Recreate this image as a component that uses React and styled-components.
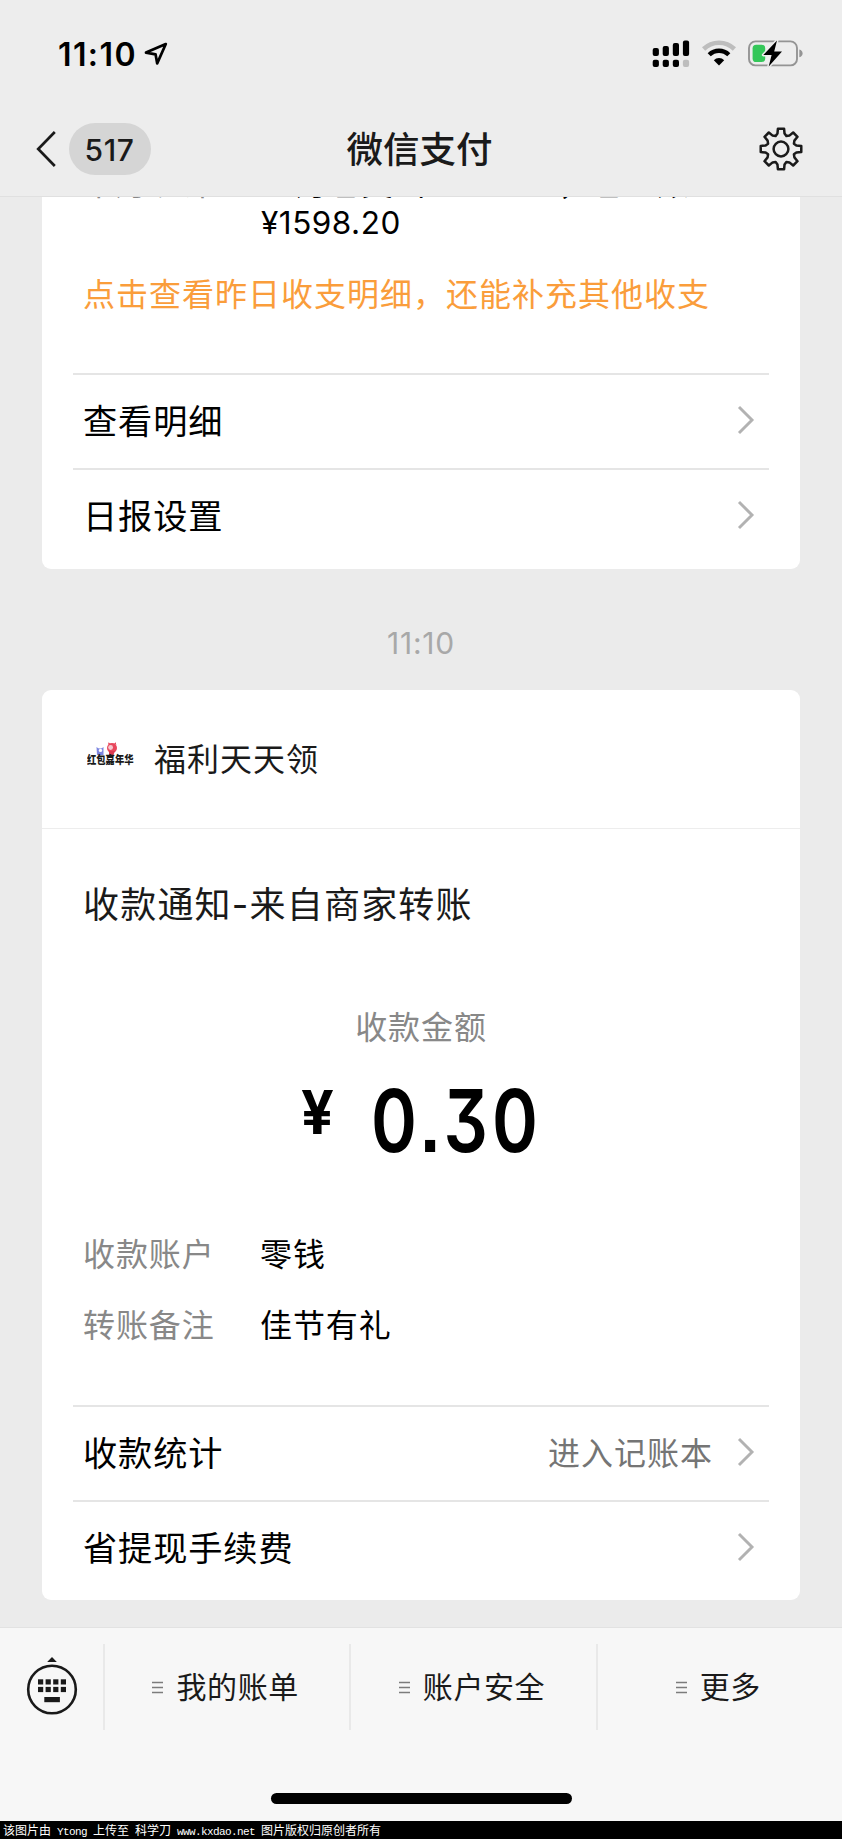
import styled, { createGlobalStyle } from "styled-components"

const GlobalStyle = createGlobalStyle`
    * {
        box-sizing: border-box;
    }

    body {
        margin: 0;
        background: #ebebeb;
        font-family: Inter, "Noto Sans CJK SC", sans-serif;
        color: #000;
    }
`

const links = {
    report: [{ title: "查看明细" }, { title: "日报设置" }],
    payment: [{ title: "收款统计", hint: "进入记账本" }, { title: "省提现手续费" }],
}

const fields = [
    { label: "收款账户", value: "零钱" },
    { label: "转账备注", value: "佳节有礼" },
]

const menus = ["我的账单", "账户安全", "更多"]

const LocationIcon = () => (
    <svg width="24" height="24" viewBox="0 0 24 24" fill="none" stroke="#000" strokeWidth="2.7" strokeLinejoin="round">
        <path d="M21.8 2 L2 10.6 L11.6 12.4 L13.2 21.4 Z" />
    </svg>
)

const SignalIcon = () => (
    <svg width="38" height="28" viewBox="0 0 38 28">
        <rect x="0.7" y="8" width="6.2" height="8" rx="2" />
        <rect x="10.7" y="6" width="6.2" height="10" rx="2" />
        <rect x="20.8" y="3" width="6.2" height="13" rx="2" />
        <rect x="30.9" y="0.5" width="6.2" height="15.5" rx="2" />
        <rect x="0.7" y="19.7" width="6.2" height="7.3" rx="2" />
        <rect x="10.7" y="19.7" width="6.2" height="7.3" rx="2" />
        <rect x="20.8" y="19.7" width="6.2" height="7.3" rx="2" />
        <rect x="30.9" y="19.7" width="6.2" height="7.3" rx="2" fill="#bdbdbd" />
    </svg>
)

const WifiIcon = () => (
    <svg width="34" height="28" viewBox="0 0 34 28" fill="none">
        <path d="M1.6 9 A22 22 0 0 1 32.4 9" stroke="#bdbdbd" strokeWidth="4.6" />
        <path d="M7.2 14.7 A14 14 0 0 1 26.8 14.7" stroke="#000" strokeWidth="4.4" />
        <path d="M17 25.4 L11.8 20.2 A7.4 7.4 0 0 1 22.2 20.2 Z" fill="#000" />
    </svg>
)

const BatteryIcon = () => (
    <svg width="55" height="28" viewBox="0 0 55 28">
        <rect x="1" y="1.4" width="48" height="24" rx="6.5" fill="none" stroke="#949494" strokeWidth="1.9" />
        <path d="M51.3 9.6 Q54.6 10.6 54.6 13.4 Q54.6 16.2 51.3 17.2 Z" fill="#949494" />
        <rect x="4.6" y="4.8" width="12.6" height="17.2" rx="3.6" fill="#34c759" />
        <path
            d="M29 0.4 L15.3 15 H23.6 L20.7 26.6 L34 11.4 H26.2 Z"
            fill="#000"
            stroke="#ededed"
            strokeWidth="3"
            paintOrder="stroke"
            strokeLinejoin="round"
        />
    </svg>
)

const BackIcon = () => (
    <svg width="20" height="38" viewBox="0 0 20 38" fill="none" stroke="#1a1a1a" strokeWidth="2.7">
        <path d="M18.8 2 L2.2 19 L18.8 36" />
    </svg>
)

// eight teeth, built from one tooth outline turned by 45 degrees
const GearIcon = () => {
    const tooth = [
        [14, -22.5],
        [15.8, -13],
        [20.5, -8.6],
        [20.5, 8.6],
        [15.8, 13],
    ]
    const points = []
    for (let i = 0; i < 8; i++) {
        tooth.forEach(([r, deg]) => {
            const a = ((i * 45 + deg) * Math.PI) / 180
            points.push(`${(22 + r * Math.cos(a)).toFixed(2)},${(22 + r * Math.sin(a)).toFixed(2)}`)
        })
    }
    return (
        <svg width="44" height="44" viewBox="0 0 44 44" fill="none" stroke="#1a1a1a" strokeWidth="2.5" strokeLinejoin="round">
            <polygon points={points.join(" ")} />
            <circle cx="22" cy="22" r="7.4" />
        </svg>
    )
}

const Chevron = () => (
    <svg width="18" height="30" viewBox="0 0 18 30" fill="none" stroke="#b2b2b2" strokeWidth="2.9">
        <path d="M2 2 L15 15 L2 28" />
    </svg>
)

const KeyboardIcon = () => (
    <svg width="52" height="60" viewBox="0 0 52 60" fill="#1a1a1a">
        <path d="M26 1 L30.8 6 H21.2 Z" />
        <circle cx="26" cy="33.5" r="23.8" fill="none" stroke="#1a1a1a" strokeWidth="2.6" />
        {[0, 1].map((row) =>
            [0, 1, 2, 3].map((col) => (
                <rect key={`${row}${col}`} x={12 + col * 7.6} y={23.3 + row * 7.6} width="5.2" height="5.2" />
            ))
        )}
        <rect x="18.3" y="41" width="15.6" height="5.2" />
    </svg>
)

const MenuIcon = () => (
    <svg width="11" height="13" viewBox="0 0 11 13" stroke="#7c7c7c" strokeWidth="1.3">
        <path d="M0 1.5 H11 M0 6.5 H11 M0 11.5 H11" />
    </svg>
)

const MerchantLogo = () => (
    <Logo>
        <svg width="22" height="14" viewBox="0 0 22 14">
            <path d="M0.5 5 Q4 8 7.5 5 V13 H1 Z" fill="#7d86e0" />
            <circle cx="4.5" cy="8.4" r="1.7" fill="#fff" />
            <circle cx="16" cy="6" r="5" fill="#e8475c" />
            <path d="M12 2.5 L12.6 0.3 L14.5 2 M18 1.8 L19.8 0.3 L20.3 3" fill="#e8475c" />
            <circle cx="14.6" cy="5.5" r="2.4" fill="#f5c8cf" />
            <path d="M13 9 H19 L17 14 H13 Z" fill="#d93a50" />
        </svg>
        <LogoText>红包嘉年华</LogoText>
    </Logo>
)

const LinkRows = ({ items }) => (
    <Links>
        {items.map((item) => (
            <LinkRow key={item.title}>
                <span>{item.title}</span>
                {item.hint && <Hint>{item.hint}</Hint>}
                <Chevron />
            </LinkRow>
        ))}
    </Links>
)

const App = () => {
    return (
        <>
            <GlobalStyle />
            <Page>
                <Header>
                    <StatusBar>
                        <Clock>11:10</Clock>
                        <LocationIcon />
                        <StatusIcons>
                            <SignalIcon />
                            <WifiIcon />
                            <BatteryIcon />
                        </StatusIcons>
                    </StatusBar>
                    <NavBar>
                        <Back>
                            <BackIcon />
                            <Unread>517</Unread>
                        </Back>
                        <PageTitle>微信支付</PageTitle>
                        <Settings>
                            <GearIcon />
                        </Settings>
                    </NavBar>
                </Header>

                <Chat>
                    <ReportCard>
                        <Summary>
                            <SummaryLabel>本月统计</SummaryLabel>
                            <div>
                                <SummaryLine>10月已支出¥800.00，已入账</SummaryLine>
                                <div>¥1598.20</div>
                            </div>
                        </Summary>
                        <Promo>点击查看昨日收支明细，还能补充其他收支</Promo>
                        <LinkRows items={links.report} />
                    </ReportCard>

                    <Time>11:10</Time>

                    <Card>
                        <Merchant>
                            <MerchantLogo />
                            <span>福利天天领</span>
                        </Merchant>
                        <NoticeTitle>收款通知-来自商家转账</NoticeTitle>
                        <AmountLabel>收款金额</AmountLabel>
                        <Amount>
                            <Yen>¥</Yen>
                            <Digits>0.30</Digits>
                        </Amount>
                        <Fields>
                            {fields.map((field) => (
                                <Field key={field.label}>
                                    <dt>{field.label}</dt>
                                    <dd>{field.value}</dd>
                                </Field>
                            ))}
                        </Fields>
                        <LinkRows items={links.payment} />
                    </Card>
                </Chat>

                <Footer>
                    <MenuBar>
                        <KeyboardButton>
                            <KeyboardIcon />
                        </KeyboardButton>
                        {menus.map((menu) => (
                            <MenuButton key={menu}>
                                <MenuIcon />
                                <span>{menu}</span>
                            </MenuButton>
                        ))}
                    </MenuBar>
                    <HomeIndicator />
                </Footer>

                <Watermark>
                    该图片由<Latin> Ytong </Latin>上传至<Latin> </Latin>科学刀<Latin> www.kxdao.net </Latin>图片版权归原创者所有
                </Watermark>
            </Page>
        </>
    )
}

const Page = styled.div`
    width: 842px;
    height: 1839px;
    display: flex;
    flex-direction: column;
    overflow: hidden;
    white-space: nowrap;
`

const Header = styled.header`
    height: 197px;
    flex: none;
    background: #ededed;
    border-bottom: 1px solid #e0e0e0;
`

const StatusBar = styled.div`
    height: 101px;
    padding: 6px 39px 0 58px;
    display: flex;
    align-items: center;
`

const Clock = styled.div`
    width: 86px;
    padding-top: 2px;
    font-size: 32px;
    line-height: 40px;
    font-weight: 600;
    letter-spacing: 1.4px;
`

const StatusIcons = styled.div`
    margin-left: auto;
    display: flex;
    align-items: center;
    gap: 12px;
`

const NavBar = styled.div`
    height: 96px;
    display: grid;
    grid-template-columns: 1fr auto 1fr;
    align-items: center;
    padding: 0 39px 0 36px;
`

const Back = styled.div`
    display: flex;
    align-items: center;
    gap: 13px;
`

const Unread = styled.div`
    width: 82px;
    height: 52px;
    border-radius: 26px;
    background: #d5d5d5;
    color: #1a1a1a;
    font-size: 30px;
    line-height: 54px;
    text-align: center;
    font-weight: 450;
    letter-spacing: 0.6px;
    text-indent: -1px;
`

const PageTitle = styled.h1`
    margin: 0;
    padding-top: 2px;
    font-size: 36.5px;
    line-height: 40px;
    font-weight: 500;
    color: #1a1a1a;
`

const Settings = styled.div`
    justify-self: end;
    display: flex;
`

const Chat = styled.main`
    height: 1430px;
    flex: none;
    padding: 0 42px;
`

const Card = styled.section`
    background: #fff;
    border-radius: 9px;
    overflow: hidden;
`

const ReportCard = styled(Card)`
    height: 372px;
    border-radius: 0 0 9px 9px;
`

const Summary = styled.div`
    height: 45px;
    padding: 0 41px;
    display: flex;
    align-items: flex-end;
    font-size: 31.5px;
    line-height: 38px;
    letter-spacing: 0.5px;
`

const SummaryLabel = styled.div`
    width: 178px;
    height: 77px;
    letter-spacing: 1.3px;
    color: #888;
`

const SummaryLine = styled.div`
    height: 39px;
    letter-spacing: 1.2px;
`

const Promo = styled.p`
    margin: 30px 41px 55px;
    height: 46px;
    line-height: 46px;
    font-size: 32px;
    letter-spacing: 1px;
    color: #fa9d3b;
`

const Links = styled.div`
    margin: 0 31px;
    padding-bottom: 5px;
`

const LinkRow = styled.div`
    height: 95px;
    border-top: 2px solid #e5e5e5;
    padding: 0 14px 0 10px;
    display: flex;
    align-items: center;
    font-size: 34.2px;
    line-height: 40px;
    letter-spacing: 0.9px;

    svg {
        margin: -4px 0 0 auto;
    }
`

const Hint = styled.span`
    margin-left: auto;
    font-size: 32px;
    letter-spacing: 1px;
    color: #757575;

    & + svg {
        margin-left: 24px;
    }
`

const Time = styled.div`
    height: 121px;
    padding-top: 25px;
    line-height: 98px;
    text-align: center;
    font-size: 30px;
    letter-spacing: 0.8px;
    color: #a8a8a8;
`

const Merchant = styled.div`
    height: 139px;
    padding: 2px 0 0 45px;
    border-bottom: 1px solid #ededed;
    display: flex;
    align-items: center;
    gap: 20px;
    font-size: 32px;
    line-height: 40px;
    letter-spacing: 1px;
    color: #1a1a1a;
`

const Logo = styled.div`
    width: 47px;
    margin-top: -13px;

    svg {
        display: block;
        margin-left: 9px;
    }
`

const LogoText = styled.div`
    margin-top: -2px;
    height: 12px;
    line-height: 12px;
    font-size: 9.3px;
    font-weight: 900;
    letter-spacing: 0;
    transform: scaleY(1.25);
`

const NoticeTitle = styled.h2`
    margin: 51px 41px 0;
    height: 50px;
    line-height: 50px;
    font-size: 36px;
    letter-spacing: 1.2px;
    font-weight: 400;
    color: #1a1a1a;
`

const AmountLabel = styled.div`
    margin-top: 75px;
    height: 46px;
    line-height: 46px;
    text-align: center;
    font-size: 32px;
    letter-spacing: 0.9px;
    color: #888;
`

const Amount = styled.div`
    height: 125px;
    padding: 38px 0 0 259px;
    display: flex;
    align-items: flex-start;
`

const Yen = styled.span`
    width: 70px;
    font-size: 60px;
    font-weight: 700;
    line-height: 47px;
    transform: scaleX(0.96);
    transform-origin: left;
`

const Digits = styled.span`
    font-size: 86px;
    font-weight: 600;
    line-height: 64px;
    letter-spacing: 5px;
    font-feature-settings: "cv09", "ss07";
    transform: scaleX(0.81);
    transform-origin: left;
`

const Fields = styled.dl`
    margin: 43px 41px 0;
    height: 186px;
`

const Field = styled.div`
    height: 71.5px;
    display: flex;
    align-items: center;
    font-size: 32px;
    line-height: 40px;
    letter-spacing: 0.9px;

    dt {
        width: 177px;
        color: #888;
    }

    dd {
        margin: 0;
    }
`

const Footer = styled.footer`
    height: 194px;
    flex: none;
    background: #f7f7f7;
    border-top: 1px solid #e2e2e2;
`

const MenuBar = styled.div`
    height: 103px;
    padding-top: 16px;
    display: flex;
`

const KeyboardButton = styled.div`
    width: 103px;
    padding-top: 12px;
    text-align: center;
`

const MenuButton = styled.div`
    flex: 1;
    height: 86px;
    border-left: 2px solid #e9e9e9;
    padding-right: 3px;
    display: flex;
    align-items: center;
    justify-content: center;
    gap: 13px;
    font-size: 30px;
    line-height: 36px;
    letter-spacing: 0.6px;
    color: #1a1a1a;
`

const HomeIndicator = styled.div`
    width: 301px;
    height: 11px;
    margin: 62px auto 0;
    border-radius: 6px;
    background: #000;
`

const Watermark = styled.div`
    height: 18px;
    padding-left: 3px;
    background: #000;
    color: #fff;
    font-family: "Noto Sans CJK SC", sans-serif;
    font-size: 12px;
    line-height: 18px;
`

const Latin = styled.span`
    font-family: "Liberation Mono", monospace;
    font-size: 11px;
    letter-spacing: -0.6px;
    white-space: pre;
`

export default App
